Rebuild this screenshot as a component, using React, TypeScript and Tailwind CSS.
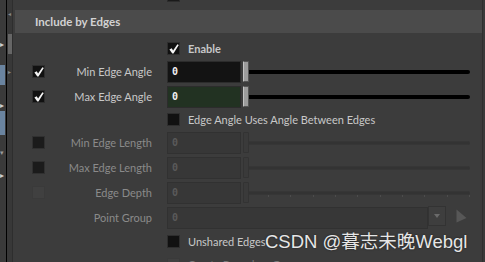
import React from "react";

const label = "font-['Lato',sans-serif] text-[11px] leading-none";

type Tone = "on" | "dim" | "faint";

const tones: Record<Tone, { fill: string; stroke: string }> = {
  on: { fill: "#111111", stroke: "#2e2e2e" },
  dim: { fill: "#1b1b1b", stroke: "#303030" },
  faint: { fill: "#404040", stroke: "#3a3a3a" },
};

const Box = ({ checked = false, tone = "on" }: { checked?: boolean; tone?: Tone }) => (
  <svg viewBox="0 0 13 13" width={13} height={13} className="shrink-0">
    <rect x="0.5" y="0.5" width="12" height="12" fill={tones[tone].fill} stroke={tones[tone].stroke} />
    {checked && (
      <path d="M2.4 7.4 L4.7 6.3 L6.1 8.4 L10.4 2.2 L11.8 3.1 L6.5 11.5 L5.3 11.5 Z" fill="#f4f4f4" />
    )}
  </svg>
);

const Toggle = ({
  text,
  checked = false,
  tone = "on",
  bold = false,
  h,
}: {
  text: string;
  checked?: boolean;
  tone?: Tone;
  bold?: boolean;
  h: string;
}) => (
  <div className={`flex items-center shrink-0 ${h}`}>
    <div className="w-[154px] shrink-0" />
    <Box checked={checked} tone={tone} />
    <span
      className={`ml-[8px] ${label} ${bold ? "font-bold" : ""} ${
        tone === "faint" ? "text-[#777]" : "text-[#c8c8c8]"
      }`}
    >
      {text}
    </span>
  </div>
);

const Track = ({ enabled, ticks }: { enabled: boolean; ticks?: boolean }) => (
  <div className="relative flex-1 mr-[12px] h-full flex flex-col justify-center">
    {enabled ? (
      <div className="h-[4px] bg-black rounded-r-[2px]" />
    ) : (
      <div className="h-[4px] bg-[#333333] border-y border-[#363636] rounded-r-[2px]" />
    )}
    {ticks && (
      <div className="absolute left-[19px] right-0 top-[15px] flex justify-between">
        {Array.from({ length: 10 }).map((_, i) => (
          <div key={i} className="w-px h-[2px] bg-[#4c4c4c]" />
        ))}
      </div>
    )}
  </div>
);

const Field = ({
  text,
  box,
  checked = false,
  value = "0",
  variant,
  ticks,
}: {
  text: string;
  box?: Tone;
  checked?: boolean;
  value?: string;
  variant: "dark" | "green" | "off";
  ticks?: boolean;
}) => {
  const enabled = variant !== "off";
  const fieldLook =
    variant === "dark"
      ? "bg-[#131313] border-[#2c2c2c] text-[#f0f0f0]"
      : variant === "green"
      ? "bg-[#223222] border-[#2c2c2c] text-[#f0f0f0]"
      : "bg-[#373737] border-[#313131] text-[#5a5a5a]";
  return (
    <div className="flex items-center h-[25px] shrink-0">
      <div className="w-[19px] shrink-0" />
      <div className="w-[13px] shrink-0">{box && <Box checked={checked} tone={box} />}</div>
      <div
        className={`w-[107px] shrink-0 text-right ${label} ${
          enabled ? "text-[#c8c8c8]" : "text-[#8a8a8a]"
        }`}
      >
        {text}
      </div>
      <div className="w-[15px] shrink-0" />
      <div
        className={`w-[74px] h-[22px] shrink-0 border flex items-center pl-[4px] font-['DejaVu_Sans_Mono',monospace] text-[10px] font-bold ${fieldLook}`}
      >
        {value}
      </div>
      <div className="w-[2px] shrink-0" />
      <div
        className={`w-[6px] h-[21px] shrink-0 border rounded-[1px] ${
          enabled
            ? "bg-[#9c9c9c] border-[#555] border-l-[#c4c4c4]"
            : "bg-[#3a3a3a] border-[#333]"
        }`}
      />
      <Track enabled={enabled} ticks={ticks} />
    </div>
  );
};

const Gutter = () => (
  <div className="w-[13px] h-full shrink-0 flex">
    <div className="w-[6px] h-full bg-[#3a3a3a] flex flex-col">
      <div className="h-[40px]" />
      <div className="text-[#cfcfcf] text-[8px] leading-none h-[25px]">▸</div>
      <div className="h-[20px] w-[5px] bg-[#6a84a0]" />
      <div className="h-[16px]" />
      <div className="text-[#cfcfcf] text-[8px] leading-none h-[10px]">▸</div>
      <div className="h-[24px] w-[5px] bg-[#6a84a0]" />
      <div className="h-[14px]" />
      <div className="text-[#9a9a9a] text-[7px] leading-none h-[22px]">▾</div>
      <div className="text-[#cfcfcf] text-[8px] leading-none">▸</div>
    </div>
    <div className="w-px h-full bg-black" />
    <div className="w-[5px] h-full bg-[#383838] flex flex-col items-center">
      <div className="mt-[11px] text-[#888] text-[6px] leading-none">◂</div>
      <div className="mt-[17px] w-[4px] h-[20px] bg-[radial-gradient(#666_0.8px,transparent_1px)] bg-[length:2px_2px]" />
      <div className="mt-[15px] text-[#888] text-[6px] leading-none">▸</div>
    </div>
    <div className="w-px h-full bg-[#2e2e2e]" />
  </div>
);

export default function App() {
  return (
    <div className="relative w-[485px] h-[262px] overflow-hidden bg-[#3c3c3c] flex">
      <Gutter />
      <div className="w-[469px] h-full flex flex-col">
        <div className="h-[10px] shrink-0 relative">
          <div className="absolute left-[154px] top-0 w-[13px] h-[2px] bg-[#1a1a1a] border-x border-b border-[#2c2c2c]" />
        </div>
        <div className="h-[23px] ml-[2px] shrink-0 bg-[#4b4b4b] flex items-center pl-[20px]">
          <span className="font-['Lato',sans-serif] text-[11.5px] font-bold text-[#d2d2d2] leading-none">
            Include by Edges
          </span>
        </div>
        <div className="h-[4px] shrink-0" />
        <Toggle text="Enable" checked bold h="h-[22px]" />
        <Field text="Min Edge Angle" box="on" checked variant="dark" />
        <Field text="Max Edge Angle" box="on" checked variant="green" />
        <Toggle text="Edge Angle Uses Angle Between Edges" h="h-[21px]" />
        <Field text="Min Edge Length" box="dim" variant="off" />
        <Field text="Max Edge Length" box="dim" variant="off" />
        <Field text="Edge Depth" box="faint" variant="off" ticks />
        <div className="flex items-center h-[25px] shrink-0">
          <div className="w-[32px] shrink-0" />
          <div className={`w-[107px] shrink-0 text-right ${label} text-[#8a8a8a]`}>Point Group</div>
          <div className="w-[15px] shrink-0" />
          <div className="w-[261px] h-[22px] shrink-0 border border-[#313131] bg-[#373737] flex items-center pl-[4px] font-['DejaVu_Sans_Mono',monospace] text-[10px] font-bold text-[#5a5a5a]">
            0
          </div>
          <div className="w-[18px] h-[20px] self-start mt-[1px] shrink-0 bg-[#3e3e3e] border border-[#333] flex items-center justify-center">
            <svg viewBox="0 0 6 4" className="w-[6px] h-[4px]">
              <path d="M0 0 H6 L3 4 Z" fill="#6a6a6a" />
            </svg>
          </div>
          <div className="w-[10px] shrink-0" />
          <svg viewBox="0 0 11 14" className="w-[11px] h-[14px] -mt-[4px]">
            <path d="M0.5 0.5 L10.5 9 L0.5 13.5 Z" fill="#575757" />
          </svg>
        </div>
        <Toggle text="Unshared Edges" h="h-[23px]" />
        <Toggle text="Create Boundary Groups" tone="faint" h="h-[23px]" />
      </div>
      <div className="w-px h-full bg-[#2f2f2f]" />
      <div className="flex-1 h-full bg-[#3a3a3a]" />
      <div className="absolute left-[265px] top-[230px] font-['Liberation_Sans','Noto_Sans_CJK_SC',sans-serif] text-[18.5px] leading-[24px] text-[#e6e6e6] [text-shadow:0_0_2px_rgba(0,0,0,0.6)] whitespace-nowrap">
        CSDN @暮志未晚Webgl
      </div>
    </div>
  );
}
